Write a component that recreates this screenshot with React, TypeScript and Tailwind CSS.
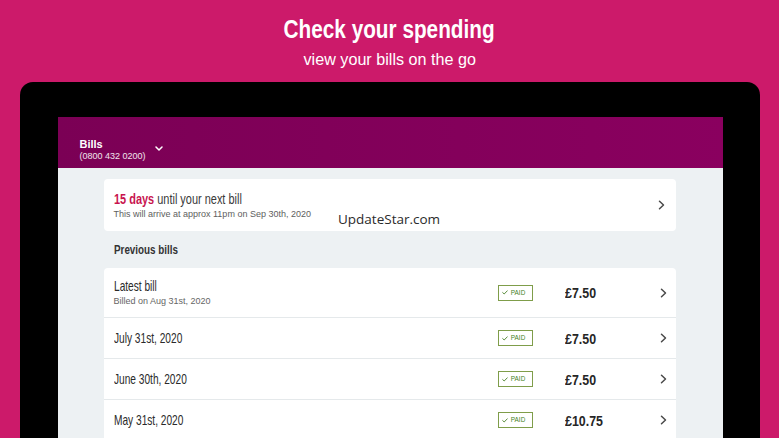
import React from "react";

const sans = { fontFamily: '"Liberation Sans", Arial, sans-serif' };

interface Bill {
    title: string;
    billed?: string;
    amount: string;
}

const bills: Bill[] = [
    { title: "Latest bill", billed: "Billed on Aug 31st, 2020", amount: "£7.50" },
    { title: "July 31st, 2020", amount: "£7.50" },
    { title: "June 30th, 2020", amount: "£7.50" },
    { title: "May 31st, 2020", amount: "£10.75" },
];

const ChevronRight = () => (
    <svg width="7" height="10" viewBox="0 0 7 10" fill="none">
        <path d="M1.5 1.2 L5.5 5 L1.5 8.8" stroke="#4a4a4a" strokeWidth="1.5" strokeLinecap="round" strokeLinejoin="round" />
    </svg>
);

const PaidBadge = () => (
    <div className="w-[35px] h-[16px] border border-[#7f9d4a] bg-white flex items-center justify-center gap-[1px]">
        <svg width="6" height="5" viewBox="0 0 6 5" fill="none">
            <path d="M0.7 2.6 L2.2 4 L5.3 0.8" stroke="#467f26" strokeWidth="0.9" strokeLinecap="round" strokeLinejoin="round" />
        </svg>
        <span className="inline-block text-[8px] leading-none text-[#467f26] scale-x-[0.8]" style={sans}>PAID</span>
    </div>
);

const BillRow: React.FC<{ bill: Bill; first: boolean }> = ({ bill, first }) => (
    <div className={`flex items-center pl-[10px] pr-[9px] ${first ? "h-[49px]" : "h-[41px] border-t border-[#e5e9eb]"}`}>
        <div className="flex-1 flex flex-col items-start">
            <span className="inline-block origin-left scale-x-[0.7] text-[14.5px] leading-[17px] text-[#2a2a2a]" style={sans}>
                {bill.title}
            </span>
            {bill.billed && (
                <span className="text-[9px] leading-[12px] text-[#666]" style={sans}>
                    {bill.billed}
                </span>
            )}
        </div>
        <PaidBadge />
        <div className="ml-[32px] w-[88px]">
            <span className="inline-block origin-left scale-x-[0.8] text-[15.5px] font-bold text-[#262626]" style={sans}>
                {bill.amount}
            </span>
        </div>
        <div className="w-[14px] flex justify-end">
            <ChevronRight />
        </div>
    </div>
);

export default function App() {
    return (
        <div className="relative w-[779px] h-[438px] overflow-hidden bg-[#cc1a6a] flex flex-col items-center">
            {/* Heading */}
            <h1 className="mt-[14px] scale-x-[0.83] text-[25px] leading-[30px] font-bold text-white" style={sans}>
                Check your spending
            </h1>
            <p className="mt-[5px] scale-x-[0.95] text-[17px] leading-[22px] text-white" style={sans}>
                view your bills on the go
            </p>

            {/* Tablet frame */}
            <div className="mt-[11px] w-[740px] flex-1 bg-black rounded-t-[13px] pt-[35px] pl-[38px] pr-[37px] flex">
                <div className="flex-1 flex flex-col">
                    {/* App bar */}
                    <div className="h-[51px] bg-gradient-to-r from-[#7b0055] to-[#8a005f] pl-[22px] pt-[21px] flex items-start">
                        <div className="flex flex-col">
                            <span className="text-[11px] leading-[13px] font-bold text-white" style={sans}>Bills</span>
                            <span className="text-[9px] leading-[11px] text-white/90" style={sans}>(0800 432 0200)</span>
                        </div>
                        <svg className="ml-[9px] mt-[8px]" width="8" height="5" viewBox="0 0 8 5" fill="none">
                            <path d="M1 1 L4 4 L7 1" stroke="#fff" strokeWidth="1.5" strokeLinecap="round" strokeLinejoin="round" />
                        </svg>
                    </div>

                    {/* Content */}
                    <div className="flex-1 bg-[#edf1f3] pt-[11px] pl-[46px] pr-[47px] flex flex-col">
                        <div className="h-[52px] bg-white rounded-[4px] pl-[10px] pr-[11px] flex items-center">
                            <div className="flex-1 flex flex-col items-start">
                                <span className="inline-block origin-left scale-x-[0.73] whitespace-nowrap text-[15px] leading-[18px] text-[#3a3a3a]" style={sans}>
                                    <span className="font-bold text-[#c8144f]">15 days</span> until your next bill
                                </span>
                                <span className="text-[9px] leading-[12px] text-[#5e5e5e]" style={sans}>
                                    This will arrive at approx 11pm on Sep 30th, 2020
                                </span>
                            </div>
                            <ChevronRight />
                        </div>

                        <h2 className="mt-[11px] pl-[10px] text-[12px] leading-[16px] font-bold text-[#333]" style={sans}>
                            <span className="inline-block origin-left scale-x-[0.82]">Previous bills</span>
                        </h2>

                        <div className="mt-[10px] bg-white rounded-t-[4px] flex flex-col">
                            {bills.map((bill, i) => (
                                <BillRow key={bill.title} bill={bill} first={i === 0} />
                            ))}
                        </div>
                    </div>
                </div>
            </div>

            {/* Watermark */}
            <span className="absolute left-[338px] top-[213px] text-[13.5px] leading-none text-[#2b2b2b]" style={{ fontFamily: '"Open Sans", sans-serif' }}>
                UpdateStar.com
            </span>
        </div>
    );
}
